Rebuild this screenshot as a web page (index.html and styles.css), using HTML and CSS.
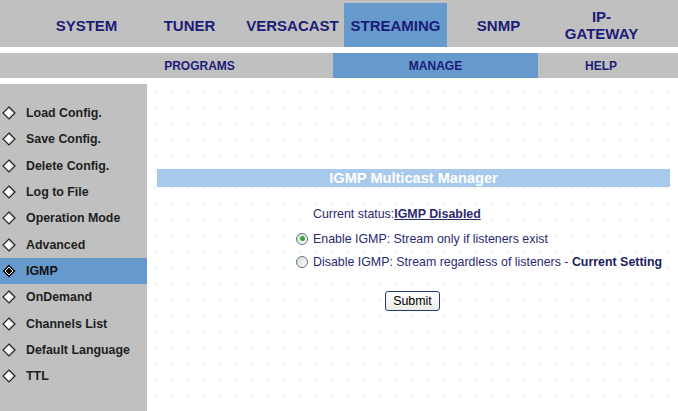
FILE: index.html
```html
<!DOCTYPE html>
<html lang="en">
<head>
    <meta charset="UTF-8">
    <title>Streaming - IGMP</title>
    <link rel="stylesheet" href="styles.css">
</head>
<body>
    <div class="topnav">
        <div class="nav-cell">SYSTEM</div>
        <div class="nav-cell">TUNER</div>
        <div class="nav-cell">VERSACAST</div>
        <div class="nav-cell active">STREAMING</div>
        <div class="nav-cell">SNMP</div>
        <div class="nav-cell">IP-<br>GATEWAY</div>
    </div>

    <div class="subnav">
        <div class="sub-cell sub-empty"></div>
        <div class="sub-cell sub-programs">PROGRAMS</div>
        <div class="sub-cell sub-manage active">MANAGE</div>
        <div class="sub-cell sub-help">HELP</div>
    </div>

    <div class="page">
        <div class="sidebar">
            <div class="side-item"><svg class="diamond" viewBox="0 0 14 14"><path d="M7 1 L13 7 L7 13 L1 7 Z" fill="#fff" stroke="#222" stroke-width="1.2"/><path d="M7 2.4 L11.6 7 L7 11.6" fill="none" stroke="#8a8a8a" stroke-width="0.8"/></svg>Load Config.</div>
            <div class="side-item"><svg class="diamond" viewBox="0 0 14 14"><path d="M7 1 L13 7 L7 13 L1 7 Z" fill="#fff" stroke="#222" stroke-width="1.2"/><path d="M7 2.4 L11.6 7 L7 11.6" fill="none" stroke="#8a8a8a" stroke-width="0.8"/></svg>Save Config.</div>
            <div class="side-item"><svg class="diamond" viewBox="0 0 14 14"><path d="M7 1 L13 7 L7 13 L1 7 Z" fill="#fff" stroke="#222" stroke-width="1.2"/><path d="M7 2.4 L11.6 7 L7 11.6" fill="none" stroke="#8a8a8a" stroke-width="0.8"/></svg>Delete Config.</div>
            <div class="side-item"><svg class="diamond" viewBox="0 0 14 14"><path d="M7 1 L13 7 L7 13 L1 7 Z" fill="#fff" stroke="#222" stroke-width="1.2"/><path d="M7 2.4 L11.6 7 L7 11.6" fill="none" stroke="#8a8a8a" stroke-width="0.8"/></svg>Log to File</div>
            <div class="side-item"><svg class="diamond" viewBox="0 0 14 14"><path d="M7 1 L13 7 L7 13 L1 7 Z" fill="#fff" stroke="#222" stroke-width="1.2"/><path d="M7 2.4 L11.6 7 L7 11.6" fill="none" stroke="#8a8a8a" stroke-width="0.8"/></svg>Operation Mode</div>
            <div class="side-item"><svg class="diamond" viewBox="0 0 14 14"><path d="M7 1 L13 7 L7 13 L1 7 Z" fill="#fff" stroke="#222" stroke-width="1.2"/><path d="M7 2.4 L11.6 7 L7 11.6" fill="none" stroke="#8a8a8a" stroke-width="0.8"/></svg>Advanced</div>
            <div class="side-item active"><svg class="diamond" viewBox="0 0 14 14"><path d="M7 0.5 L13.5 7 L7 13.5 L0.5 7 Z" fill="#111"/><path d="M7 3 L11 7 L7 11 L3 7 Z" fill="#111" stroke="#fff" stroke-width="1"/></svg>IGMP</div>
            <div class="side-item"><svg class="diamond" viewBox="0 0 14 14"><path d="M7 1 L13 7 L7 13 L1 7 Z" fill="#fff" stroke="#222" stroke-width="1.2"/><path d="M7 2.4 L11.6 7 L7 11.6" fill="none" stroke="#8a8a8a" stroke-width="0.8"/></svg>OnDemand</div>
            <div class="side-item"><svg class="diamond" viewBox="0 0 14 14"><path d="M7 1 L13 7 L7 13 L1 7 Z" fill="#fff" stroke="#222" stroke-width="1.2"/><path d="M7 2.4 L11.6 7 L7 11.6" fill="none" stroke="#8a8a8a" stroke-width="0.8"/></svg>Channels List</div>
            <div class="side-item"><svg class="diamond" viewBox="0 0 14 14"><path d="M7 1 L13 7 L7 13 L1 7 Z" fill="#fff" stroke="#222" stroke-width="1.2"/><path d="M7 2.4 L11.6 7 L7 11.6" fill="none" stroke="#8a8a8a" stroke-width="0.8"/></svg>Default Language</div>
            <div class="side-item"><svg class="diamond" viewBox="0 0 14 14"><path d="M7 1 L13 7 L7 13 L1 7 Z" fill="#fff" stroke="#222" stroke-width="1.2"/><path d="M7 2.4 L11.6 7 L7 11.6" fill="none" stroke="#8a8a8a" stroke-width="0.8"/></svg>TTL</div>
        </div>

        <div class="main">
            <div class="title-bar">IGMP Multicast Manager</div>

            <div class="status">Current status:<a href="#" class="status-link">IGMP Disabled</a></div>

            <div class="option first">
                <span class="radio checked"></span>
                <span>Enable IGMP: Stream only if listeners exist</span>
            </div>
            <div class="option">
                <span class="radio"></span>
                <span>Disable IGMP: Stream regardless of listeners - <b>Current Setting</b></span>
            </div>

            <div class="submit-row">
                <button type="button" class="btn">Submit</button>
            </div>
        </div>
    </div>
</body>
</html>
```

FILE: styles.css
```css
body {
    margin: 0;
    padding: 0;
    font-family: "Liberation Sans", Arial, sans-serif;
    background: #fff;
    color: #222;
    width: 678px;
    height: 411px;
    overflow: hidden;
}

.topnav {
    display: flex;
    background: #c0c0c0;
    height: 44px;
    padding: 3px 0 0 35px;
}

.nav-cell {
    width: 103px;
    display: flex;
    align-items: center;
    justify-content: center;
    text-align: center;
    font-weight: bold;
    font-size: 15px;
    line-height: 17px;
    color: #1c1c78;
}

.nav-cell.active {
    background: #6699cc;
}

.subnav {
    display: flex;
    margin-top: 6px;
    height: 25px;
    background: #c0c0c0;
}

.sub-cell {
    display: flex;
    align-items: center;
    justify-content: center;
    font-weight: bold;
    font-size: 12px;
    color: #1c1c78;
}

.sub-empty {
    width: 66px;
}

.sub-programs {
    width: 267px;
}

.sub-manage {
    width: 205px;
}

.sub-help {
    width: 126px;
}

.sub-cell.active {
    background: #6699cc;
}

.page {
    display: flex;
    margin-top: 6px;
    height: 327px;
}

.sidebar {
    width: 147px;
    background: #c0c0c0;
    padding-top: 16px;
    box-sizing: border-box;
}

.side-item {
    display: flex;
    align-items: center;
    height: 26.3px;
    font-size: 12.4px;
    font-weight: bold;
    color: #1e1e1e;
    padding-left: 2px;
}

.side-item.active {
    background: #6699cc;
    color: #111;
}

.diamond {
    width: 14px;
    height: 14px;
    margin-right: 10px;
}

.main {
    flex: 1;
    background-color: #fff;
    background-image: radial-gradient(circle, #f1f1f1 1px, transparent 1.6px);
    background-size: 16px 16px;
}

.title-bar {
    margin: 85px 8px 0 10px;
    height: 18px;
    line-height: 18px;
    background: #a7c9ec;
    color: #fff;
    font-weight: bold;
    font-size: 14.6px;
    text-align: center;
}

.status {
    margin-top: 19px;
    padding-left: 166px;
    font-size: 12.4px;
    line-height: 16px;
    color: #2a2a6e;
}

.status-link {
    color: #2a2a6e;
    font-weight: bold;
}

.option {
    display: flex;
    align-items: center;
    height: 23px;
    padding-left: 149px;
    font-size: 12.4px;
    color: #2a2a72;
}

.option.first {
    margin-top: 5px;
}

.option b {
    color: #1c1c5e;
}

.radio {
    width: 10px;
    height: 10px;
    border: 1px solid #5f7792;
    border-radius: 50%;
    background: linear-gradient(135deg, #d8d8d0, #fff);
    margin-right: 5px;
    position: relative;
}

.radio.checked::after {
    content: "";
    position: absolute;
    left: 2.5px;
    top: 2.5px;
    width: 5px;
    height: 5px;
    border-radius: 50%;
    background: #3fa53f;
}

.submit-row {
    margin-top: 18px;
    text-align: center;
}

.btn {
    font-family: "Liberation Sans", Arial, sans-serif;
    font-size: 12.4px;
    height: 20px;
    width: 55px;
    padding: 0;
    border: 1px solid #1e3f6e;
    border-radius: 3px;
    background: linear-gradient(#ffffff, #ecebe6);
    color: #000;
}
```
